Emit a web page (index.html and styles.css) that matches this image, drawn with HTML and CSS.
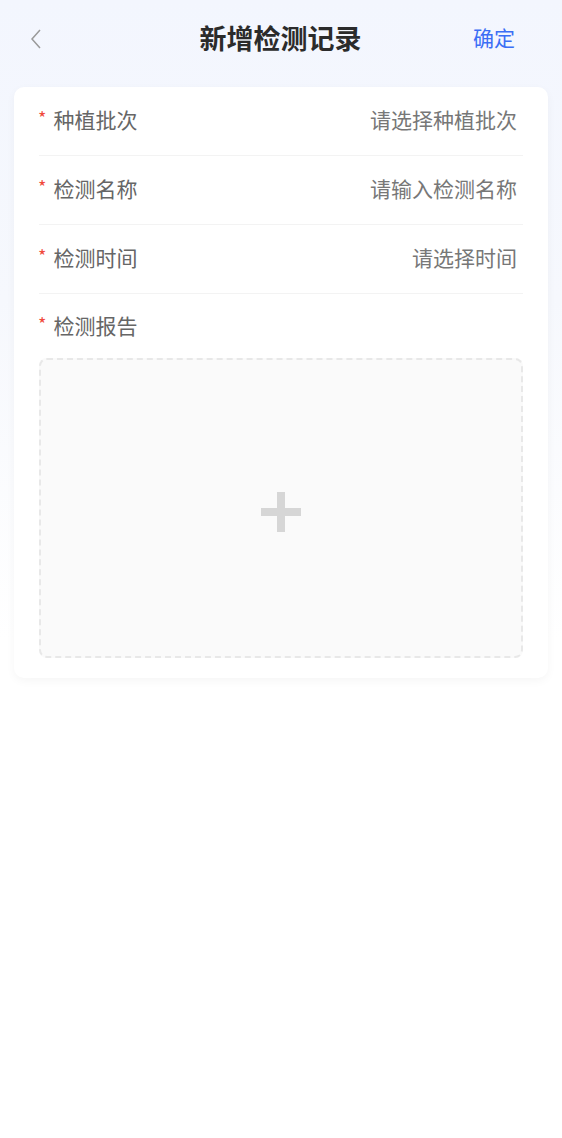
FILE: index.html
```html
<!DOCTYPE html>
<html lang="zh-CN">
<head>
  <meta charset="UTF-8" />
  <meta name="viewport" content="width=device-width, initial-scale=1.0"/>
  <title>新增检测记录</title>
  <link rel="stylesheet" href="styles.css">
</head>
<body>

  <!-- Header -->
  <div class="header">
    <div class="back">
      <svg width="12" height="20" viewBox="0 0 12 20"><path d="M10 1 L2 10 L10 19" fill="none" stroke="#9a9a9a" stroke-width="1.5"/></svg>
    </div>
    <h1>新增检测记录</h1>
    <div class="confirm">确定</div>
  </div>

  <!-- Form card -->
  <div class="card">
    <div class="row">
      <div class="label"><span class="star">*</span>种植批次</div>
      <div class="value">请选择种植批次</div>
    </div>
    <div class="row">
      <div class="label"><span class="star">*</span>检测名称</div>
      <div class="value">请输入检测名称</div>
    </div>
    <div class="row">
      <div class="label"><span class="star">*</span>检测时间</div>
      <div class="value">请选择时间</div>
    </div>
    <div class="upload-row">
      <div class="label"><span class="star">*</span>检测报告</div>
      <div class="upload">
        <div class="plus"></div>
      </div>
    </div>
  </div>

</body>
</html>
```

FILE: styles.css
```css
body {
  margin: 0;
  padding: 0;
  min-height: 1138px;
  font-family: "Noto Sans CJK SC", "Noto Sans", sans-serif;
  background: linear-gradient(to bottom, #f3f6fe 0px, #f6f8fd 300px, #ffffff 640px);
}

.header {
  height: 74px;
  display: flex;
  align-items: center;
  justify-content: space-between;
  padding: 0 47px 0 30px;
}

.back {
  width: 40px;
  display: flex;
  align-items: center;
  margin-top: 4px;
}

.header h1 {
  margin: 0;
  font-size: 27px;
  font-weight: bold;
  color: #2b2b2b;
  line-height: 1;
  margin-left: 18px;
}

.confirm {
  font-size: 21px;
  color: #3b6ef5;
  line-height: 1;
}

.card {
  margin: 13px 14px 0;
  background: #ffffff;
  border-radius: 10px;
  box-shadow: 0 3px 10px rgba(0, 0, 0, 0.04);
  padding: 0 25px 20px;
}

.row {
  height: 64px;
  padding-bottom: 4px;
  display: flex;
  align-items: center;
  justify-content: space-between;
  border-bottom: 1px solid #f3f3f3;
  padding-right: 6px;
}

.label {
  font-size: 21px;
  color: #666666;
  line-height: 30px;
  display: flex;
  align-items: center;
  margin-left: -1px;
}

.star {
  color: #f04a3c;
  font-size: 18px;
  margin-right: 7px;
  position: relative;
  top: -2px;
}

.value {
  font-size: 21px;
  color: #777777;
}

.upload-row {
  padding-top: 16px;
}

.upload {
  margin-top: 18px;
  height: 296px;
  background: #fafafa;
  border: 2px dashed #e8e8e8;
  border-radius: 8px;
  display: flex;
  align-items: center;
  justify-content: center;
}

.plus {
  width: 40px;
  height: 40px;
  margin-top: 8px;
  position: relative;
}

.plus::before,
.plus::after {
  content: "";
  position: absolute;
  background: #d6d6d6;
}

.plus::before {
  left: 0;
  top: 16px;
  width: 40px;
  height: 8px;
}

.plus::after {
  left: 16px;
  top: 0;
  width: 8px;
  height: 40px;
}
```
